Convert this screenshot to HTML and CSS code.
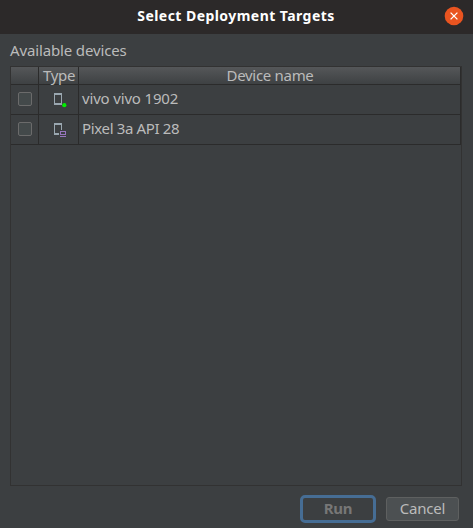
FILE: index.html
```html
<!DOCTYPE html>
<html lang="en">
<head>
<meta charset="utf-8">
<title>Select Deployment Targets</title>
<link rel="stylesheet" href="styles.css">
</head>
<body>
<div class="dialog">
  <header class="titlebar">
    <h1 class="title">Select Deployment Targets</h1>
    <button class="close" aria-label="Close">
      <svg width="20" height="20" viewBox="0 0 20 20"><circle cx="10" cy="10" r="9.3" fill="#e95420"/><path d="M6.6 6.6l6.8 6.8M13.4 6.6l-6.8 6.8" stroke="#fff" stroke-width="1.3"/></svg>
    </button>
  </header>
  <main class="content">
    <div class="label">Available devices</div>
    <div class="table">
      <div class="row head">
        <div class="cell"></div>
        <div class="cell">Type</div>
        <div class="cell">Device name</div>
      </div>
      <div class="row">
        <div class="cell"><span class="check"></span></div>
        <div class="cell">
          <svg width="16" height="16" viewBox="0 0 16 16"><path fill="#9aa7b0" fill-rule="evenodd" d="M3 2h8v12H3zM4 4v8h6V4z"/><circle cx="13.3" cy="14.2" r="2.1" fill="#00f000"/></svg>
        </div>
        <div class="cell name physical">vivo vivo 1902</div>
      </div>
      <div class="row">
        <div class="cell"><span class="check"></span></div>
        <div class="cell">
          <svg width="16" height="16" viewBox="0 0 16 16"><path fill="#9aa7b0" d="M3 2h8v7h-1V4H4v8h4v2H3z"/><path fill="#9876be" fill-rule="evenodd" d="M9 10h6v4H9zM10 11v2h4v-2zM9 15h6v1H9z"/></svg>
        </div>
        <div class="cell name">Pixel 3a API 28</div>
      </div>
    </div>
  </main>
  <footer class="actions">
    <button class="btn run">Run</button>
    <button class="btn cancel">Cancel</button>
  </footer>
</div>
</body>
</html>
```
FILE: styles.css
```css
* { box-sizing: border-box; }
body {
  margin: 0;
  background: #3c3f41;
  color: #bbbbbb;
  font: 15px/18px "Noto Sans", "Open Sans", sans-serif;
}
.dialog { width: 473px; height: 528px; display: flex; flex-direction: column; overflow: hidden; }
.titlebar {
  height: 34px;
  flex: none;
  display: grid;
  align-items: center;
  background: #2c2929;
  position: relative;
}
.title { margin: 0; padding: 0 1px 2px 0; text-align: center; font-size: 14px; line-height: 18px; font-weight: 700; color: #fff; letter-spacing: 0.45px; }
.close { position: absolute; right: 9px; top: 6px; padding: 0; border: 0; background: none; width: 20px; height: 20px; }
svg { display: block; overflow: visible; }
.content { flex: none; padding: 7px 11px 0 10px; }
.label { height: 25px; letter-spacing: -0.14px; }
.table { height: 420px; border: 1px solid #323232; }
.row {
  display: grid;
  grid-template-columns: 28px 40px 382px;
  height: 30px;
  border-bottom: 1px solid #2b2b2b;
}
.cell { display: flex; align-items: center; justify-content: center; padding: 0 0 1px 1px; border-right: 1px solid #2b2b2b; white-space: nowrap; }
.head { height: 18px; background: linear-gradient(#555759, #3e4143); }
.head .cell { padding: 0 0 0 1px; line-height: 17px; letter-spacing: -0.3px; }
.name { justify-content: flex-start; padding: 0 0 3px 3px; letter-spacing: -0.35px; }
.physical { letter-spacing: -0.17px; }
.check { width: 14px; height: 14px; border: 1px solid #6b6b6b; border-radius: 2px; background: #43494a; }
.actions { display: flex; justify-content: flex-end; align-items: center; gap: 10px; padding: 9px 14px 0 0; height: 37px; }
.btn { font: inherit; color: #bbb; padding: 0 0 2px; display: flex; align-items: center; justify-content: center; }
.run { width: 76px; height: 28px; border: 3px solid #466d94; border-radius: 5px; background: #3c3f41; color: #777777; font-weight: 700; letter-spacing: -0.3px; }
.cancel { width: 73px; height: 24px; border: 1px solid #5e6060; border-radius: 3px; background: #4c5052; letter-spacing: -0.2px; }
```
